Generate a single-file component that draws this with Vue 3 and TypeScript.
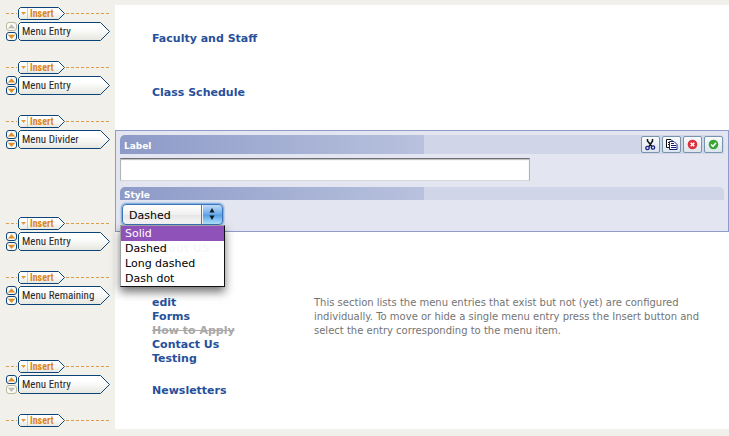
<script setup lang="ts">
import { ref } from 'vue'

interface RailItem {
  label: string
  size: 'regular' | 'medium' | 'large'
  canUp: boolean
  canDown: boolean
}

const railItems: RailItem[] = [
  { label: 'Menu Entry', size: 'regular', canUp: false, canDown: true },
  { label: 'Menu Entry', size: 'regular', canUp: true, canDown: true },
  { label: 'Menu Divider', size: 'large', canUp: true, canDown: true },
  { label: 'Menu Entry', size: 'regular', canUp: true, canDown: true },
  { label: 'Menu Remaining', size: 'medium', canUp: true, canDown: true },
  { label: 'Menu Entry', size: 'regular', canUp: true, canDown: false },
]

const remaining = [
  { name: 'edit', hidden: false },
  { name: 'Forms', hidden: false },
  { name: 'How to Apply', hidden: true },
  { name: 'Contact Us', hidden: false },
  { name: 'Testing', hidden: false },
]

const styles = ['Solid', 'Dashed', 'Long dashed', 'Dash dot']
const labelText = ref('')
const selected = ref('Dashed')
const highlighted = ref('Solid')
const menuOpen = ref(true)

function choose(option: string) {
  selected.value = option
  menuOpen.value = false
}
</script>

<template>
  <div class="page">
    <svg class="defs" aria-hidden="true">
      <defs>
        <linearGradient id="tagFill" x1="0" y1="0" x2="0" y2="1">
          <stop offset="0.3" stop-color="#ffffff" />
          <stop offset="1" stop-color="#e6e6e0" />
        </linearGradient>
      </defs>
    </svg>

    <nav class="rail" aria-label="Menu structure">
      <div v-for="(item, i) in railItems" :key="i" class="slot" :class="item.size">
        <div class="insert-line">
          <span class="dash lead"></span>
          <button type="button" class="insert">
            <svg class="shape" viewBox="0 0 47 13" aria-hidden="true">
              <path d="M2.5 .5H40.5L46.5 6.5L40.5 12.5H2.5L.5 10.5V2.5Z" fill="url(#tagFill)" stroke="#0b4478" />
              <path d="M9.5 1V12" stroke="#c9cbc8" />
              <path d="M3 5H8L5.5 8Z" fill="#e29a3c" />
            </svg>
            <span class="insert-text">Insert</span>
          </button>
          <span class="dash tail"></span>
        </div>
        <div class="entry-line">
          <div class="movers">
            <button type="button" class="mover" :disabled="!item.canUp" aria-label="Move up">
              <svg viewBox="0 0 11 9" aria-hidden="true"><path d="M1.8 6.5H9.2L5.5 2.3Z" /></svg>
            </button>
            <button type="button" class="mover" :disabled="!item.canDown" aria-label="Move down">
              <svg viewBox="0 0 11 9" aria-hidden="true"><path d="M1.8 2.7H9.200L5.5 6.9Z" /></svg>
            </button>
          </div>
          <button type="button" class="tag">
            <svg class="shape" viewBox="0 0 92 19" aria-hidden="true">
              <path d="M2.5 .5H82.5L91.5 9.5L82.5 18.5H2.5L.5 16.5V2.5Z" fill="url(#tagFill)" stroke="#0b4478" />
            </svg>
            <span class="tag-text">{{ item.label }}</span>
          </button>
        </div>
      </div>
      <div class="slot last">
        <div class="insert-line">
          <span class="dash lead"></span>
          <button type="button" class="insert">
            <svg class="shape" viewBox="0 0 47 13" aria-hidden="true">
              <path d="M2.5 .5H40.5L46.5 6.5L40.5 12.5H2.5L.5 10.5V2.5Z" fill="url(#tagFill)" stroke="#0b4478" />
              <path d="M9.5 1V12" stroke="#c9cbc8" />
              <path d="M3 5H8L5.5 8Z" fill="#e29a3c" />
            </svg>
            <span class="insert-text">Insert</span>
          </button>
          <span class="dash tail"></span>
        </div>
      </div>
    </nav>

    <main class="content">
      <div class="entry"><a href="#faculty">Faculty and Staff</a></div>
      <div class="entry"><a href="#schedule">Class Schedule</a></div>

      <form class="panel" @submit.prevent>
        <div class="bar tall">
          <label for="divider-label">Label</label>
          <div class="tools">
            <button type="button" class="tool" aria-label="Cut">
              <svg viewBox="0 0 13 13" aria-hidden="true">
                <path d="M3.5 1V3L8 8.5M8.5 1V3L5 8.5" fill="none" stroke="#111" stroke-width="1.5" />
                <circle cx="3.5" cy="10" r="1.7" fill="none" stroke="#1c2383" stroke-width="1.3" />
                <circle cx="9" cy="9.5" r="1.7" fill="none" stroke="#1c2383" stroke-width="1.3" />
              </svg>
            </button>
            <button type="button" class="tool" aria-label="Copy">
              <svg viewBox="0 0 13 13" aria-hidden="true">
                <path d="M1.5 1.5H6L8.5 4V9.5H1.5Z" fill="#fff" stroke="#111" />
                <path d="M3 4.5H5M3 6.5H5" stroke="#111" />
                <path d="M4.5 3.5H9L12 6.5V11.5H4.5Z" fill="#fff" stroke="#171d80" />
                <path d="M6 5.5H9M6 7.5H11M6 9.5H11" stroke="#171d80" />
              </svg>
            </button>
            <button type="button" class="tool" aria-label="Cancel">
              <svg viewBox="0 0 13 13" aria-hidden="true">
                <circle cx="6.5" cy="6.5" r="4.8" fill="#dc2f39" />
                <path d="M4.7 4.7L8.3 8.3M8.3 4.7L4.7 8.3" stroke="#fff" stroke-width="1.6" />
              </svg>
            </button>
            <button type="submit" class="tool" aria-label="Accept">
              <svg viewBox="0 0 13 13" aria-hidden="true">
                <circle cx="6.5" cy="6.5" r="4.8" fill="#39a535" />
                <path d="M4 6.5L6 8.3L9 4.8" fill="none" stroke="#fff" stroke-width="1.6" />
              </svg>
            </button>
          </div>
        </div>
        <input id="divider-label" v-model="labelText" class="text" type="text" />
        <div class="bar"><label for="divider-style">Style</label></div>
        <div class="picker">
          <select id="divider-style" v-model="selected" class="select" @mousedown.prevent="menuOpen = !menuOpen">
            <option v-for="s in styles" :key="s">{{ s }}</option>
          </select>
          <svg class="arrows" viewBox="0 0 20 20" aria-hidden="true">
            <path d="M7.5 8.5H12.5L10 4ZM7.5 11.5H12.5L10 16Z" fill="#101820" />
          </svg>
          <ul v-if="menuOpen" class="options" role="listbox" aria-label="Style">
            <li
              v-for="s in styles"
              :key="s"
              role="option"
              :aria-selected="s === highlighted"
              :class="{ active: s === highlighted }"
              @mouseenter="highlighted = s"
              @click="choose(s)"
            >{{ s }}</li>
          </ul>
        </div>
      </form>

      <div class="entry"><a href="#about">About US</a></div>
      <div class="remaining">
        <ul class="names">
          <li v-for="r in remaining" :key="r.name">
            <a href="#remaining" :class="{ off: r.hidden }">{{ r.name }}</a>
          </li>
        </ul>
        <p class="help">
          This section lists the menu entries that exist but not (yet) are configured
          individually. To move or hide a single menu entry press the Insert button and
          select the entry corresponding to the menu item.
        </p>
      </div>
      <div class="entry"><a href="#newsletters">Newsletters</a></div>
    </main>
  </div>
</template>

<style>
body {
  background: #f1f0eb;
}
</style>

<style scoped>
.page {
  display: grid;
  grid-template-columns: 115px minmax(0, 1fr);
  padding: 5px 0 7px;
  font: 11px/14px Verdana, "DejaVu Sans", sans-serif;
  background: #f1f0eb;
}
.page * {
  box-sizing: border-box;
}
.defs {
  position: absolute;
  width: 0;
  height: 0;
}
button {
  margin: 0;
  padding: 0;
  border: 0;
  background: none;
  font: inherit;
}
.rail {
  padding: 0 5px 0 6px;
}
.slot {
  min-height: 54px;
  padding-top: 2px;
}
.slot.large {
  min-height: 102px;
}
.slot.medium {
  min-height: 89px;
}
.slot.last {
  min-height: 17px;
}
.insert-line {
  display: flex;
  align-items: center;
  gap: 1px;
  height: 13px;
}
.dash {
  height: 1px;
  background: repeating-linear-gradient(90deg, #e09c44 0 3px, transparent 3px 5px);
}
.lead {
  width: 11px;
}
.tail {
  flex: 1;
}
.insert {
  position: relative;
  width: 47px;
  height: 13px;
  padding-left: 12px;
  text-align: left;
}
.shape {
  position: absolute;
  inset: 0;
  width: 100%;
  height: 100%;
}
.insert-text {
  position: relative;
  display: block;
  color: #dc8420;
  font: bold 10px/12px "Roboto Condensed", "Liberation Sans Narrow", "Liberation Sans", sans-serif;
}
.entry-line {
  display: flex;
  gap: 1px;
  margin-top: 2px;
}
.movers {
  display: grid;
  gap: 1px;
}
.mover {
  width: 11px;
  height: 9px;
  border: 1px solid #0b4478;
  border-radius: 3px;
  background: #fbfaf5;
}
.mover svg {
  display: block;
  width: 11px;
  height: 9px;
  margin: -1px;
  fill: #e08e2a;
}
.mover:disabled {
  border-color: #b9b795;
}
.mover:disabled svg {
  fill: #bdbdbb;
}
.tag {
  position: relative;
  width: 92px;
  height: 19px;
  padding-left: 4px;
  text-align: left;
}
.tag-text {
  position: relative;
  display: block;
  color: #262626;
  white-space: nowrap;
  font: 11px/20px "Roboto Condensed", "Liberation Sans Narrow", "Liberation Sans", sans-serif;
}
.content {
  padding-top: 17px;
  background: #fff;
}
a {
  color: #27509b;
  font-weight: bold;
  text-decoration: none;
}
.entry {
  min-height: 54px;
  padding: 10px 20px 0 37px;
}
.panel {
  min-height: 102px;
  padding: 4px;
  border: 1px solid #8f9bc8;
  background: #e3e6f1;
}
.bar {
  display: flex;
  align-items: center;
  justify-content: space-between;
  height: 13px;
  padding: 0 1px 0 4px;
  border-radius: 5px 5px 0 0;
  background: linear-gradient(90deg, #8d9ac7, #b8c2de) 0 0 / 304px 100% no-repeat #d0d6e8;
  color: #fff;
  font-size: 9px;
  font-weight: bold;
}
.bar label {
  padding-top: 2px;
}
.bar.tall {
  height: 19px;
}
.tools {
  display: flex;
  gap: 2px;
}
.tool {
  display: grid;
  place-items: center;
  width: 19px;
  height: 17px;
  border: 1px solid #7895ad;
  border-radius: 2px;
  background: linear-gradient(#f8fafc, #dce5ee);
}
.tool svg {
  width: 13px;
  height: 13px;
}
.text {
  display: block;
  width: 410px;
  max-width: 100%;
  height: 23px;
  margin: 4px 0 6px;
  padding: 2px 4px;
  border: 1px solid #b5b5b5;
  border-top-color: #6e6e76;
  border-bottom-color: #d6d6d6;
  box-shadow: inset 0 1px 1px #bbb;
  background: #fff;
  font: inherit;
  outline: none;
}
.picker {
  position: relative;
  width: 104px;
  padding: 4px 1px 0 2px;
}
.select {
  display: block;
  width: 101px;
  height: 21px;
  padding: 2px 22px 0 6px;
  appearance: none;
  border: 1px solid #3c73b9;
  border-radius: 4px;
  outline: none;
  box-shadow: 0 0 2px 1px #65a0dc;
  background:
    linear-gradient(90deg, #4a7fc0, #4a7fc0) 79px 0 / 1px 100% no-repeat border-box,
    linear-gradient(#c0dcf8, #70aeea 45%, #579ee5 55%, #b4e8ff) 80px 0 / 20px 100% no-repeat,
    linear-gradient(#fff, #f0f0f0 50%, #e4e4e4 51%, #fafafa);
  color: #000;
  font: inherit;
}
.arrows {
  position: absolute;
  top: 4px;
  right: 2px;
  width: 20px;
  height: 20px;
  pointer-events: none;
}
.options {
  position: absolute;
  z-index: 2;
  top: 25px;
  left: 0;
  width: 105px;
  margin: 0;
  padding: 0;
  border: 1px solid #111;
  border-left-color: #a0a0a0;
  border-top-color: #a0a0a0;
  background: rgba(255, 255, 255, 0.96);
  box-shadow: 0 5px 9px rgba(0, 0, 0, 0.55);
  list-style: none;
  color: #000;
}
.options li {
  height: 15px;
  padding: 1px 4px 0;
}
.options .active {
  background: #8f52b8;
  color: #fff;
}
.remaining {
  display: grid;
  grid-template-columns: 162px minmax(0, 400px);
  min-height: 88px;
  padding: 10px 10px 0 37px;
}
.names {
  margin: 0;
  padding: 0;
  list-style: none;
}
.names .off {
  color: #a9a9a9;
  text-decoration: line-through;
}
.help {
  margin: 0;
  color: #747474;
  font-size: 10px;
}
</style>
